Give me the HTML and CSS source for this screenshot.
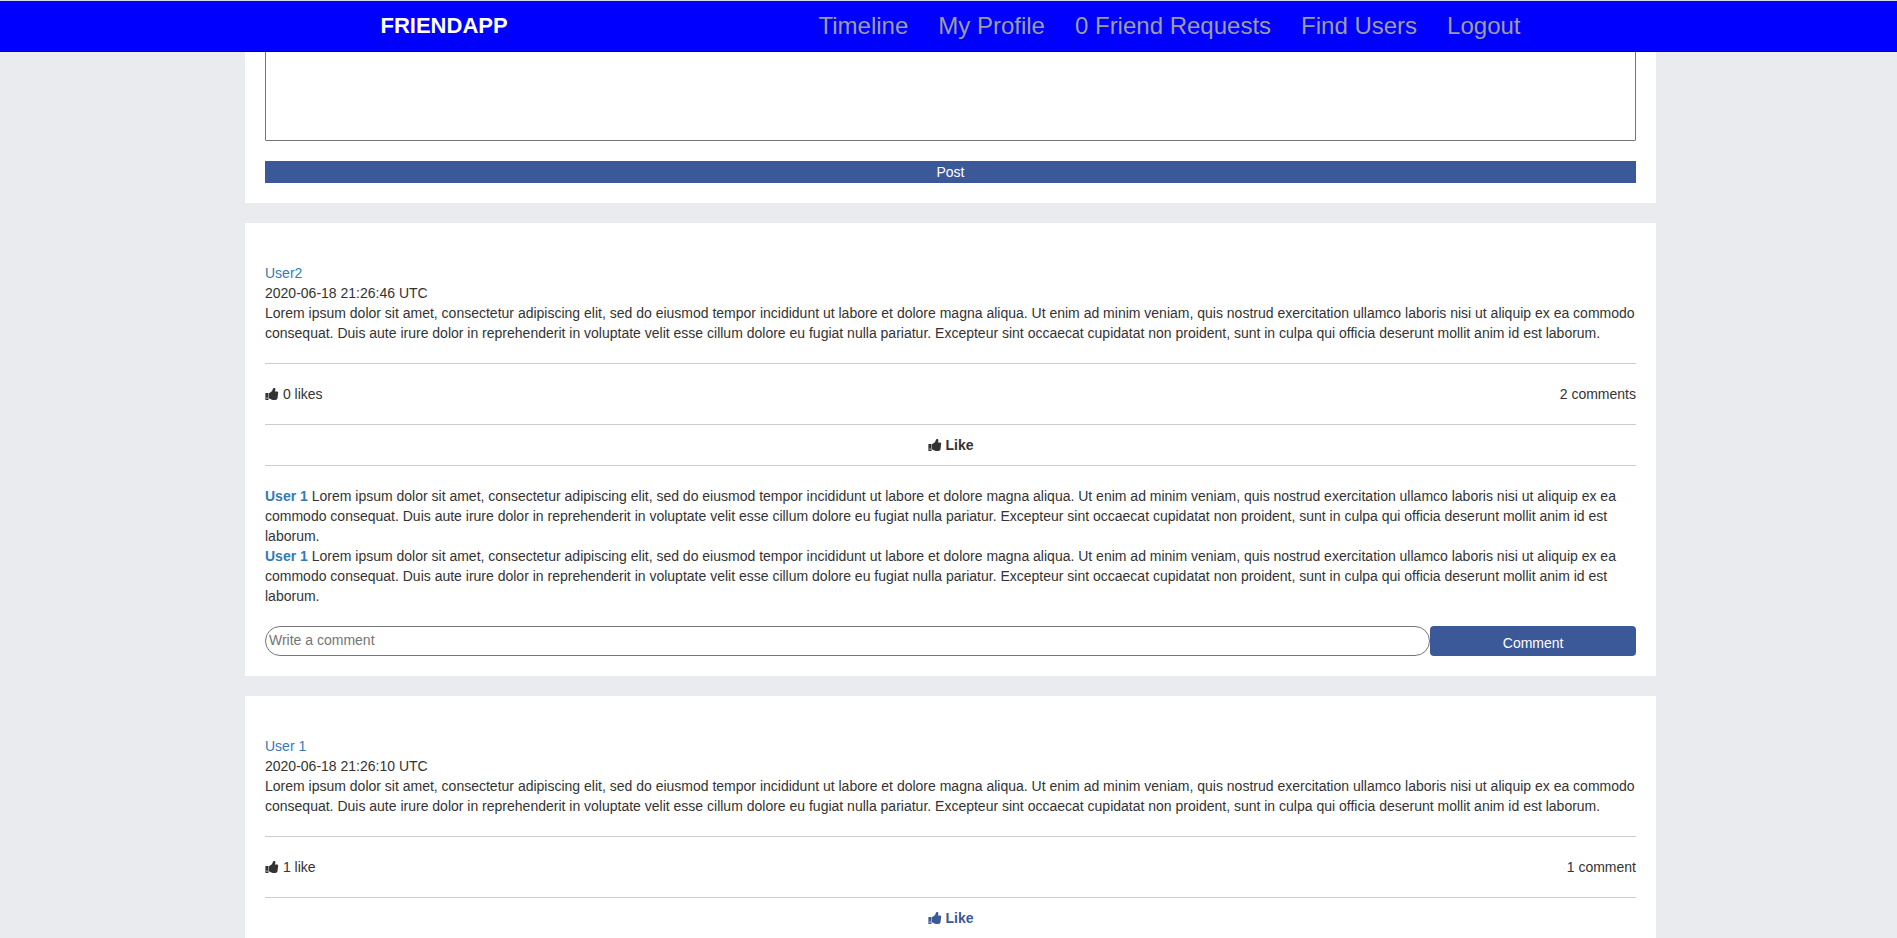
FILE: index.html
```html
<!DOCTYPE html>
<html lang="en">
<head>
  <meta charset="utf-8">
  <title>FriendApp</title>
  <link rel="stylesheet" href="styles.css">
</head>
<body>
  <svg class="sprite" width="0" height="0" aria-hidden="true">
    <symbol id="thumb" viewBox="0 0 14 14">
      <path d="M.4 6H3.500v7H.4zM1.500 10.500v1.200h1v-1.200z" fill-rule="evenodd"/>
      <path d="M4 6.300 6.200 4.800C7.300 4 7.500 3.200 7.800 2c.2-.9 1.100-1.300 1.900-.9.900.5.800 1.600.500 2.600L9.900 4.500H12c.8 0 1.300.6 1.200 1.300L12.500 11c-.2 1-.6 1.500-1.300 1.700-.8.200-1.600.3-2.500.3-1.300 0-2.100-.3-2.900-.8L4 11.300z"/>
    </symbol>
  </svg>

  <header class="navbar">
    <div class="navbar-inner">
      <a class="brand" href="#">FRIENDAPP</a>
      <nav class="nav">
        <a href="#">Timeline</a>
        <a href="#">My Profile</a>
        <a href="#">0 Friend Requests</a>
        <a href="#">Find Users</a>
        <a href="#">Logout</a>
      </nav>
    </div>
  </header>

  <main class="timeline">
    <form class="card compose">
      <textarea class="compose-text" aria-label="Post content"></textarea>
      <button class="compose-submit" type="button">Post</button>
    </form>

    <article class="card post">
      <div class="post-body">
        <a href="#">User2</a>
        <time>2020-06-18 21:26:46 UTC</time>
        <p>Lorem ipsum dolor sit amet, consectetur adipiscing elit, sed do eiusmod tempor incididunt ut labore et dolore magna aliqua. Ut enim ad minim veniam, quis nostrud exercitation ullamco laboris nisi ut aliquip ex ea commodo consequat. Duis aute irure dolor in reprehenderit in voluptate velit esse cillum dolore eu fugiat nulla pariatur. Excepteur sint occaecat cupidatat non proident, sunt in culpa qui officia deserunt mollit anim id est laborum.</p>
      </div>
      <div class="post-stats">
        <span><svg class="icon" aria-hidden="true"><use href="#thumb"/></svg> 0 likes</span>
        <span>2 comments</span>
      </div>
      <button class="like" type="button"><svg class="icon" aria-hidden="true"><use href="#thumb"/></svg> Like</button>
      <div class="comments">
        <p><a href="#">User 1</a> Lorem ipsum dolor sit amet, consectetur adipiscing elit, sed do eiusmod tempor incididunt ut labore et dolore magna aliqua. Ut enim ad minim veniam, quis nostrud exercitation ullamco laboris nisi ut aliquip ex ea commodo consequat. Duis aute irure dolor in reprehenderit in voluptate velit esse cillum dolore eu fugiat nulla pariatur. Excepteur sint occaecat cupidatat non proident, sunt in culpa qui officia deserunt mollit anim id est laborum.</p>
        <p><a href="#">User 1</a> Lorem ipsum dolor sit amet, consectetur adipiscing elit, sed do eiusmod tempor incididunt ut labore et dolore magna aliqua. Ut enim ad minim veniam, quis nostrud exercitation ullamco laboris nisi ut aliquip ex ea commodo consequat. Duis aute irure dolor in reprehenderit in voluptate velit esse cillum dolore eu fugiat nulla pariatur. Excepteur sint occaecat cupidatat non proident, sunt in culpa qui officia deserunt mollit anim id est laborum.</p>
      </div>
      <form class="comment-form">
        <input class="comment-input" type="text" placeholder="Write a comment" aria-label="Write a comment">
        <button class="comment-submit" type="button">Comment</button>
      </form>
    </article>

    <article class="card post post-last">
      <div class="post-body">
        <a href="#">User 1</a>
        <time>2020-06-18 21:26:10 UTC</time>
        <p>Lorem ipsum dolor sit amet, consectetur adipiscing elit, sed do eiusmod tempor incididunt ut labore et dolore magna aliqua. Ut enim ad minim veniam, quis nostrud exercitation ullamco laboris nisi ut aliquip ex ea commodo consequat. Duis aute irure dolor in reprehenderit in voluptate velit esse cillum dolore eu fugiat nulla pariatur. Excepteur sint occaecat cupidatat non proident, sunt in culpa qui officia deserunt mollit anim id est laborum.</p>
      </div>
      <div class="post-stats">
        <span><svg class="icon" aria-hidden="true"><use href="#thumb"/></svg> 1 like</span>
        <span>1 comment</span>
      </div>
      <button class="like liked" type="button"><svg class="icon" aria-hidden="true"><use href="#thumb"/></svg> Like</button>
    </article>
  </main>
</body>
</html>
```

FILE: styles.css
```css
* {
  box-sizing: border-box;
}

body {
  margin: 0;
  background: #e9ebee;
  color: #333;
  font-family: "Liberation Sans", Arial, sans-serif;
  font-size: 14px;
  line-height: 20px;
}

p {
  margin: 0;
}

a {
  color: #337ab7;
  text-decoration: none;
}

button,
input,
textarea {
  font: inherit;
}

button {
  cursor: pointer;
}

.sprite {
  position: absolute;
}

.icon {
  width: 14px;
  height: 14px;
  fill: currentColor;
  vertical-align: -2px;
}

/* Top bar, stays over the scrolling timeline */
.navbar {
  position: fixed;
  top: 0;
  left: 0;
  right: 0;
  padding-left: 4px;
  background: #00f;
  border-top: 1px solid #d5d9e4;
  border-bottom: 1px solid #080808;
}

.navbar-inner {
  display: flex;
  justify-content: space-between;
  max-width: 1170px;
  margin: 0 auto;
  padding: 0 15px;
  line-height: 50px;
}

.brand {
  color: #fff;
  font-size: 22px;
  font-weight: bold;
}

.nav {
  display: flex;
  gap: 30px;
  font-size: 24px;
}

.nav a {
  color: #9d9d9d;
}

.timeline {
  display: flex;
  flex-direction: column;
  gap: 20px;
  padding: 0 241px 0 245px;
}

.card {
  padding: 20px;
  background: #fff;
}

.compose {
  display: flex;
  flex-direction: column;
  gap: 20px;
}

.compose-text {
  height: 121px;
  border: 1px solid #767676;
  border-radius: 1px;
  resize: none;
}

.compose-submit {
  padding: 1px 6px;
  border: 0;
  background: #3b5998;
  color: #fff;
}

.post {
  padding-top: 40px;
}

.post-last {
  padding-bottom: 0;
}

.post-body {
  padding-bottom: 20px;
}

.post-body a,
.post-body time {
  display: block;
}

.post-stats {
  display: flex;
  justify-content: space-between;
  padding: 20px 0;
  border-top: 1px solid #ccc;
  border-bottom: 1px solid #ccc;
}

.like {
  display: block;
  width: 100%;
  padding: 10px 0;
  border: 0;
  background: none;
  color: #333;
  font-weight: bold;
}

.liked {
  color: #3b5998;
}

.comments {
  padding: 20px 0;
  border-top: 1px solid #ccc;
}

.comments a {
  font-weight: bold;
}

.comment-form {
  display: grid;
  grid-template-columns: 85fr 15fr;
}

.comment-input {
  height: 30px;
  min-width: 0;
  padding: 0 3px 2px;
  border: 1px solid #767676;
  border-radius: 15px;
}

.comment-input::placeholder {
  color: #757575;
}

.comment-submit {
  padding: 4px 0 0;
  border: 0;
  border-radius: 4px;
  background: #3b5998;
  color: #fff;
}
```
